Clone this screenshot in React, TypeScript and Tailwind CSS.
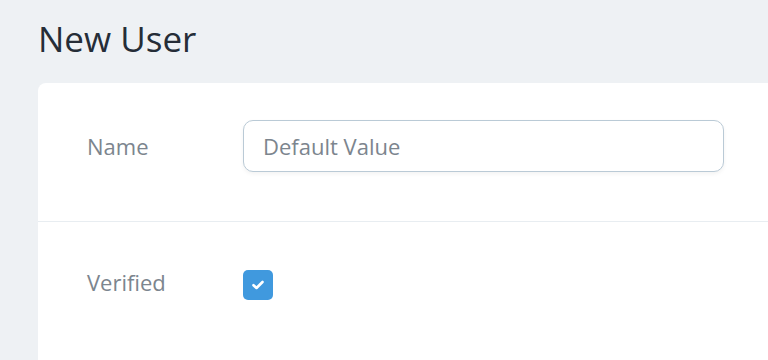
import * as React from "react";

export default function App() {
  const [name, setName] = React.useState("");
  const [verified, setVerified] = React.useState(true);

  return (
    <div className="h-[360px] w-full overflow-hidden bg-[#eef1f4] pl-[38px] font-['Open_Sans',sans-serif]">
      <h1 className="pt-[19px] text-[35px] leading-[40px] font-normal text-[#252d37]">New User</h1>

      <div className="mt-[24px] w-[800px] rounded-[8px] bg-white">
        {/* Name */}
        <div className="flex items-center border-b border-[#e8edf1] pt-[37px] pb-[49px]">
          <label className="w-[205px] pl-[49px] text-[22px] text-[#7c858e]">Name</label>
          <input
            type="text"
            value={name}
            onChange={(e) => setName(e.target.value)}
            placeholder="Default Value"
            className="h-[52px] w-[481px] rounded-[10px] border border-[#bacad6] bg-white px-[19px] text-[22px] text-[#3c4655] shadow-[0_2px_4px_rgba(0,0,0,0.05)] outline-none placeholder:text-[#7c858e]"
          />
        </div>

        {/* Verified */}
        <div className="flex items-start pt-[48px] pb-[80px]">
          <label className="-mt-[3px] w-[205px] pl-[49px] text-[22px] leading-[30px] text-[#7c858e]">Verified</label>
          <button
            type="button"
            onClick={() => setVerified(!verified)}
            className={
              verified
                ? "flex h-[30px] w-[30px] items-center justify-center rounded-[5px] bg-[#4099de]"
                : "flex h-[30px] w-[30px] items-center justify-center rounded-[5px] border border-[#bacad6] bg-white"
            }
          >
            {verified && (
              <svg width="12" height="10" viewBox="0 0 12 10" fill="none">
                <path d="M1.5 5.2L4.5 8L10.5 2" stroke="white" strokeWidth="2.6" strokeLinecap="round" strokeLinejoin="round" />
              </svg>
            )}
          </button>
        </div>
      </div>
    </div>
  );
}
